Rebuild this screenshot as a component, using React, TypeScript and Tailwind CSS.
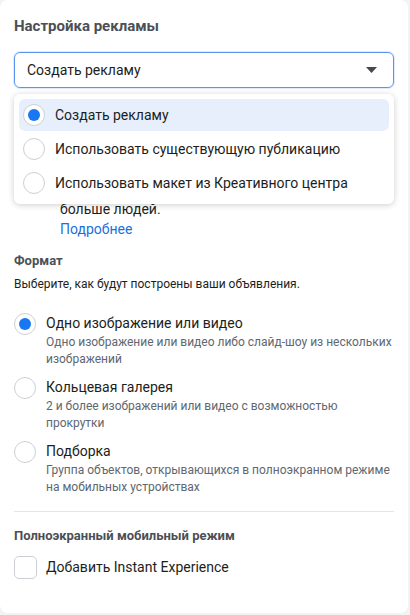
import React from 'react'

const font = { fontFamily: 'Roboto, "Noto Sans", Arial, sans-serif' }

function Radio({ checked }: { checked?: boolean }) {
  return (
    <div className="flex h-[22px] w-[22px] shrink-0 items-center justify-center rounded-full border border-[#ccd0d5] bg-white">
      {checked && <div className="h-[12px] w-[12px] rounded-full bg-[#1877f2]"></div>}
    </div>
  )
}

function MenuItem({ label, active }: { label: string; active?: boolean }) {
  return (
    <div
      className={
        'flex h-[32px] items-center gap-[10px] rounded-md px-[4px] ' +
        (active ? 'bg-[#e7effd]' : '')
      }
    >
      <Radio checked={active} />
      <span className="text-[14px] text-[#1c1e21]">{label}</span>
    </div>
  )
}

function FormatOption({
  title,
  desc,
  checked,
}: {
  title: string
  desc: string
  checked?: boolean
}) {
  return (
    <div className="flex gap-[10px]">
      <Radio checked={checked} />
      <div className="flex-1">
        <div className="text-[14px] leading-[20px] text-[#1c1e21]">{title}</div>
        <div className="pt-[1px] text-[12px] leading-[17px] text-[#606770]">{desc}</div>
      </div>
    </div>
  )
}

export default function App() {
  return (
    <div className="h-[615px] w-[410px] overflow-hidden bg-[#f2f3f5]" style={font}>
      <div className="relative h-[613px] w-[408px] rounded-lg bg-white px-[14px]">
        <div className="pt-[16px] text-[15px] font-bold leading-[20px] text-[#4b4f56]">
          Настройка рекламы
        </div>

        <div className="mt-[16px] flex h-[36px] items-center justify-between rounded-md border border-[#5a96f0] pl-[12px] pr-[16px] shadow-[0_0_0_1px_rgba(24,119,242,0.15)]">
          <span className="text-[14px] text-[#1c1e21]">Создать рекламу</span>
          <svg width="11" height="6" viewBox="0 0 11 6">
            <path d="M0 0h11L5.5 6z" fill="#444950" />
          </svg>
        </div>

        {/* content under the open menu; only its last lines show */}
        <div className="mt-[111px] pl-[46px] text-[14px] leading-[20px] text-[#1c1e21]">
          <div>больше людей.</div>
          <div className="text-[#216fdb]">Подробнее</div>
        </div>

        <div className="absolute left-[14px] right-[14px] top-[94px] flex flex-col gap-[2px] rounded-md bg-white p-[5px] shadow-[0_1px_6px_rgba(0,0,0,0.2)]">
          <MenuItem label="Создать рекламу" active />
          <MenuItem label="Использовать существующую публикацию" />
          <MenuItem label="Использовать макет из Креативного центра" />
        </div>

        <div className="mt-[12px] text-[13px] font-bold leading-[20px] text-[#4b4f56]">Формат</div>
        <div className="mt-[5px] text-[12px] leading-[16px] text-[#1c1e21]">
          Выберите, как будут построены ваши объявления.
        </div>

        <div className="mt-[21px] flex flex-col gap-[9px]">
          <FormatOption
            checked
            title="Одно изображение или видео"
            desc="Одно изображение или видео либо слайд-шоу из нескольких изображений"
          />
          <FormatOption
            title="Кольцевая галерея"
            desc="2 и более изображений или видео с возможностью прокрутки"
          />
          <FormatOption
            title="Подборка"
            desc="Группа объектов, открывающихся в полноэкранном режиме на мобильных устройствах"
          />
        </div>

        <div className="mt-[15px] h-px bg-[#e4e6eb]"></div>

        <div className="mt-[14px] text-[13px] font-bold leading-[20px] text-[#4b4f56]">
          Полноэкранный мобильный режим
        </div>
        <div className="mt-[10px] flex items-center gap-[9px]">
          <div className="h-[23px] w-[23px] rounded-[5px] border border-[#ccd0d5] bg-white"></div>
          <span className="text-[14px] text-[#1c1e21]">Добавить Instant Experience</span>
        </div>
      </div>
    </div>
  )
}
